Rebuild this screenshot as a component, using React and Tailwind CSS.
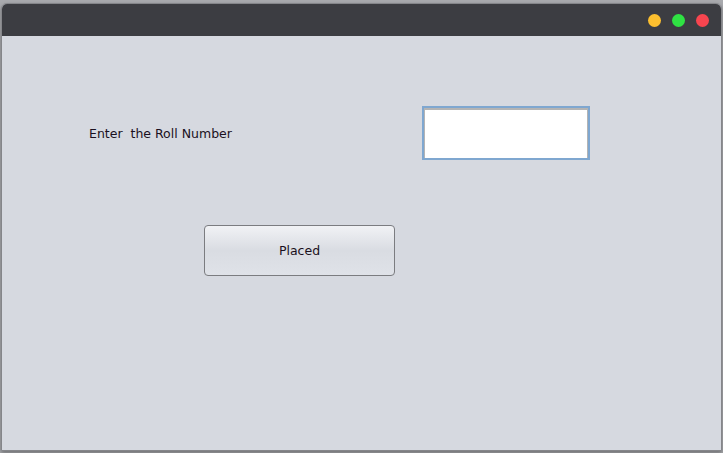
import React from 'react';

const App = () => {
  return (
    <div className="w-[723px] h-[453px] bg-[#a9aaae] pt-[3px] pl-[1px] overflow-hidden" style={{ fontFamily: '"DejaVu Sans", sans-serif' }}>
      <div className="w-[721px] h-[448px] flex flex-col rounded-t-[6px] border border-[#85868a] bg-[#d6d9e0] shadow-[0_2px_4px_rgba(0,0,0,0.35)] overflow-hidden">
        {/* title bar */}
        <div className="h-[32px] shrink-0 bg-[#3c3d42] flex items-center justify-end gap-[11px] pr-[12px]">
          <span className="w-[13px] h-[13px] rounded-full bg-[#fcbf2f]" />
          <span className="w-[13px] h-[13px] rounded-full bg-[#2fe243]" />
          <span className="w-[13px] h-[13px] rounded-full bg-[#f7454f]" />
        </div>

        {/* content */}
        <div className="flex-1 pt-[70px] pl-[87px]">
          <div className="flex items-center">
            <div className="w-[333px] pt-[2px] text-[12.5px] text-[#1a1020] whitespace-pre">Enter  the Roll Number</div>
            <input
              type="text"
              className="w-[168px] h-[54px] bg-white border-2 border-[#7fa7d0] outline-none shadow-[inset_0_1px_0_1px_#b4b4b4]"
            />
          </div>

          <button className="mt-[65px] ml-[115px] w-[191px] h-[51px] pt-[2px] rounded-[4px] border border-[#7b7c80] bg-gradient-to-b from-[#f1f2f5] via-[#d9dce2] to-[#dfe2e8] text-[12.5px] text-[#1a1020]">
            Placed
          </button>
        </div>
      </div>
    </div>
  );
};

export default App;
